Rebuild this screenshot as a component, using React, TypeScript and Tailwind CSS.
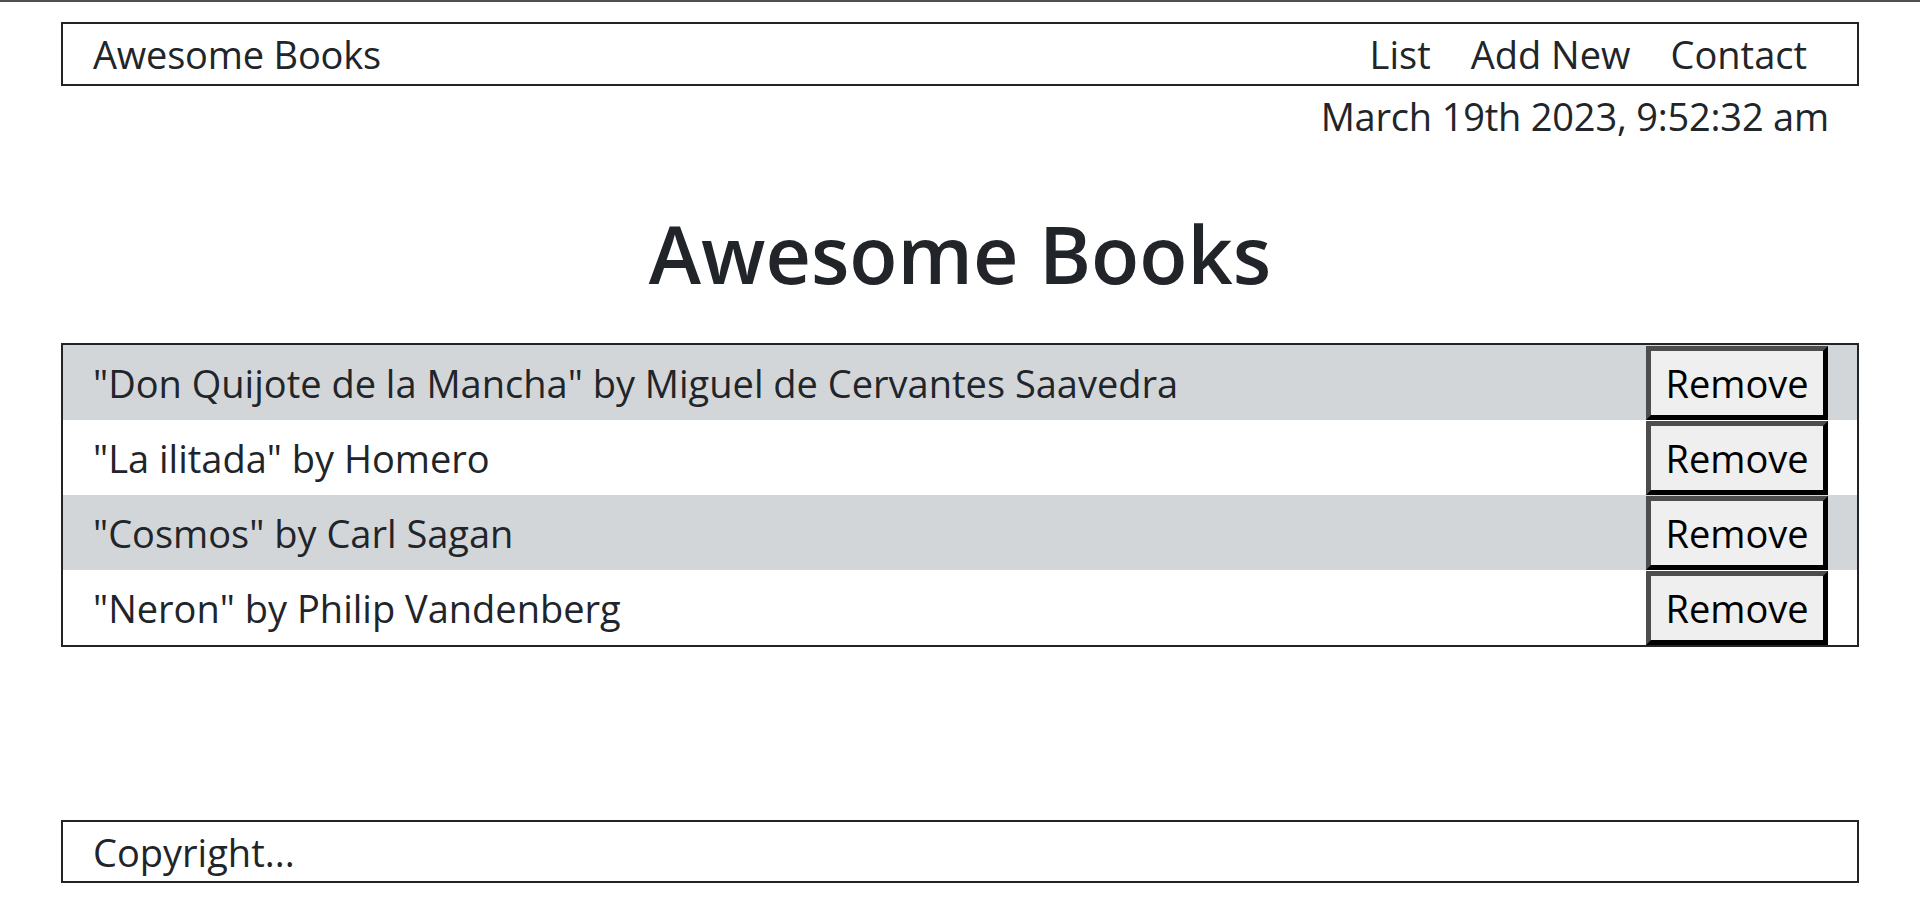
import React from "react";

const books = [
  { title: "Don Quijote de la Mancha", author: "Miguel de Cervantes Saavedra" },
  { title: "La ilitada", author: "Homero" },
  { title: "Cosmos", author: "Carl Sagan" },
  { title: "Neron", author: "Philip Vandenberg" },
];

export default function App() {
  return (
    <div
      className="min-h-[902px] flex flex-col bg-white text-[#212529] text-[38px] leading-[60px]"
      style={{ fontFamily: '"Segoe UI", "Open Sans", "Noto Sans", Arial, sans-serif' }}
    >
      <div className="h-[2px] bg-[#4f4f4f]" />
      <div className="flex flex-col flex-1 px-[61px]">
        <header className="mt-[20px] h-[64px] border-2 border-[#212529] flex items-center justify-between pl-[30px] pr-[50px]">
          <span className="tracking-[-0.2px]">Awesome Books</span>
          <nav className="flex gap-[40px]">
            <a>List</a>
            <a>Add New</a>
            <a>Contact</a>
          </nav>
        </header>
        <p className="text-right pr-[30px] tracking-[-0.2px]">March 19th 2023, 9:52:32 am</p>
        <h1 className="mt-[60px] text-center font-semibold text-[79px] leading-[96px]">Awesome Books</h1>
        <ul className="mt-[41px] border-2 border-[#212529]">
          {books.map((b, i) => (
            <li
              key={b.title}
              className={`h-[75px] flex items-center justify-between pl-[30px] pr-[29px] ${
                i % 2 === 0 ? "bg-[#d3d6d8]" : "bg-white"
              }`}
            >
              <span>
                "{b.title}" by {b.author}
              </span>
              <button className="h-[74px] w-[182px] bg-[#efefef] text-black border-[5px] border-t-[#4d4d4d] border-l-[#4d4d4d] border-r-black border-b-black">
                Remove
              </button>
            </li>
          ))}
        </ul>
        <footer className="mt-auto mb-[19px] h-[63px] border-2 border-[#212529] flex items-center pl-[30px]">
          Copyright...
        </footer>
      </div>
    </div>
  );
}
